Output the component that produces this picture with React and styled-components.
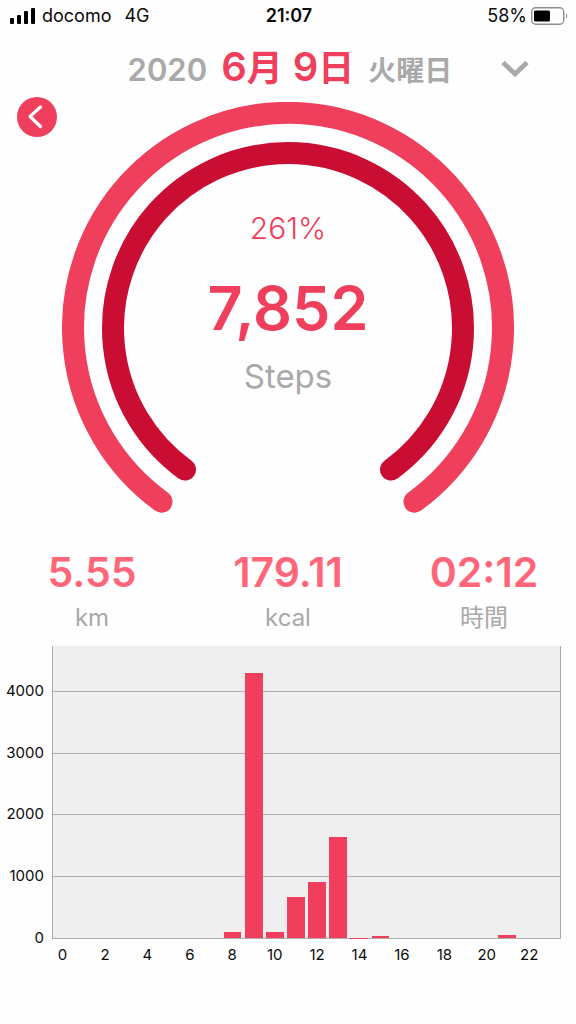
import React from "react";
import styled, { createGlobalStyle } from "styled-components";

const rose = "#ef3f5c";
const coral = "#ff667a";
const crimson = "#c90d33";
const grey = "#a9a9a9";

const GlobalStyle = createGlobalStyle`
  *, *::before, *::after { box-sizing: border-box; }
  body {
    margin: 0;
    background: #fefefe;
    color: #0b0b0b;
    font-family: Inter, "Noto Sans CJK JP", sans-serif;
  }
`;

const Screen = styled.div`
  display: flex;
  flex-direction: column;
  min-height: 100vh;
`;

const StatusBar = styled.div`
  display: grid;
  grid-template-columns: 1fr auto 1fr;
  align-items: center;
  height: 32px;
  padding: 0 8px 0 10px;
  font-size: 18px;
  line-height: 24px;
`;

const StatusGroup = styled.div`
  display: flex;
  align-items: center;
  justify-content: ${(p) => (p.$end ? "flex-end" : "flex-start")};
  gap: ${(p) => (p.$end ? 4 : 7)}px;
`;

const Network = styled.span`
  margin-left: 6px;
`;

const Clock = styled.time`
  font-weight: 600;
`;

const Header = styled.header`
  display: grid;
  grid-template-columns: 1fr auto 1fr;
  align-items: center;
  height: 65px;
  padding: 0 44px 0 48px;
`;

const DateTitle = styled.h1`
  grid-column: 2;
  display: flex;
  align-items: baseline;
  gap: 14px;
  margin: 0;
  padding-top: 9px;
  font-size: 31px;
  line-height: 48px;
  font-weight: 600;
  color: ${grey};
  white-space: nowrap;
`;

const MonthDay = styled.span`
  display: flex;
  align-items: baseline;
  font-size: 40px;
  color: ${rose};
`;

const Unit = styled.span`
  font-size: 36px;
  margin-right: ${(p) => (p.$spaced ? 10 : 0)}px;
`;

const Weekday = styled.span`
  font-size: 28px;
`;

const IconButton = styled.button`
  display: grid;
  place-items: center;
  padding: 0;
  border: 0;
  background: none;
  cursor: pointer;
`;

const ExpandButton = styled(IconButton)`
  justify-self: end;
  width: 34px;
  height: 40px;
  margin-top: 8px;
`;

const BackButton = styled(IconButton)`
  grid-area: 1 / 1;
  align-self: start;
  width: 40px;
  height: 40px;
  margin-left: 17px;
  border-radius: 50%;
  background: ${rose};
  z-index: 1;
`;

const Stage = styled.section`
  display: grid;
`;

const Gauge = styled.div`
  grid-area: 1 / 1;
  justify-self: center;
  display: grid;
  padding-top: 5px;
`;

const Rings = styled.svg`
  grid-area: 1 / 1;
  display: block;
`;

const Readout = styled.div`
  grid-area: 1 / 1;
  display: flex;
  flex-direction: column;
  align-items: center;
  padding-top: 106px;
`;

const Percent = styled.span`
  font-size: 30px;
  line-height: 40px;
  font-weight: 300;
  color: ${rose};
`;

const Steps = styled.strong`
  margin-top: 20px;
  font-size: 61px;
  line-height: 80px;
  font-weight: 600;
  color: ${rose};
`;

const StepsLabel = styled.span`
  margin-top: 8px;
  font-size: 33px;
  line-height: 40px;
  color: ${grey};
`;

const Stats = styled.dl`
  display: grid;
  grid-template-columns: repeat(3, 120px);
  justify-content: space-between;
  margin: 32px 0 0;
  padding: 0 32px;
`;

const Stat = styled.div`
  display: flex;
  flex-direction: column-reverse;
  align-items: center;
`;

const StatValue = styled.dd`
  margin: 0;
  font-size: 41px;
  line-height: 52px;
  font-weight: 600;
  color: ${coral};
`;

const StatLabel = styled.dt`
  font-size: 24px;
  line-height: 40px;
  color: ${grey};
`;

const Chart = styled.figure`
  display: grid;
  grid-template-columns: 52px 1fr;
  grid-template-rows: 293px auto;
  margin: 8px 15px 0 0;
`;

const YAxis = styled.div`
  display: grid;
  grid-template-rows: 740fr repeat(4, 1000fr);
  padding-right: 8px;
  font-size: 15px;
  line-height: 16px;
  text-align: right;
`;

const YTick = styled.span`
  align-self: end;
  margin-bottom: -7px;
`;

const Plot = styled.div`
  display: grid;
  border: solid ${grey};
  border-width: 0 1px;
  background: #efefef;
`;

const Bands = styled.div`
  grid-area: 1 / 1;
  display: grid;
  grid-template-rows: 740fr repeat(4, 1000fr);
`;

const Band = styled.div`
  border-bottom: 1px solid #adadad;
`;

const Bars = styled.div`
  grid-area: 1 / 1;
  display: grid;
  grid-template-columns: repeat(24, 1fr);
  align-items: end;
  justify-items: center;
  padding-bottom: 1px;
`;

const Bar = styled.div`
  width: 84%;
  background: ${rose};
`;

const XAxis = styled.div`
  grid-column: 2;
  display: grid;
  grid-template-columns: repeat(12, 2fr);
  padding-top: 8px;
  font-size: 15px;
  line-height: 16px;
`;

const XTick = styled.span`
  width: 50%;
  display: flex;
  justify-content: center;
`;

const AXIS_MAX = 4740;
const yTicks = [4000, 3000, 2000, 1000, 0];
const hourly = [
  0, 0, 0, 0, 0, 0, 0, 0, 100, 4300, 90, 665,
  915, 1640, 6, 25, 0, 0, 0, 0, 0, 50, 0, 0,
];
const xTicks = [0, 2, 4, 6, 8, 10, 12, 14, 16, 18, 20, 22];
const stats = [
  { value: "5.55", label: "km" },
  { value: "179.11", label: "kcal" },
  { value: "02:12", label: "時間" },
];

export default function App() {
  return (
    <Screen lang="ja">
      <GlobalStyle />
      <StatusBar>
        <StatusGroup>
          <svg width="25" height="16" viewBox="0 0 25 16" aria-hidden="true">
            <rect x="0" y="10" width="4" height="6" rx="1" />
            <rect x="7" y="7" width="4" height="9" rx="1" />
            <rect x="14" y="3" width="4" height="13" rx="1" />
            <rect x="21" y="0" width="4" height="16" rx="1" />
          </svg>
          <span>docomo</span>
          <Network>4G</Network>
        </StatusGroup>
        <Clock>21:07</Clock>
        <StatusGroup $end>
          <span>58%</span>
          <svg width="37" height="18" viewBox="0 0 37 18" aria-hidden="true">
            <rect x="0.75" y="0.75" width="32" height="16.5" rx="4" fill="none" stroke="#8f8f8f" strokeWidth="1.4" />
            <rect x="3" y="3.5" width="16" height="11" rx="1.5" />
            <path d="M35 6.5c1.6.8 1.6 4.2 0 5z" fill="#8f8f8f" />
          </svg>
        </StatusGroup>
      </StatusBar>

      <Header>
        <DateTitle>
          <span>2020</span>
          <MonthDay>
            6<Unit $spaced>月</Unit>9<Unit>日</Unit>
          </MonthDay>
          <Weekday>火曜日</Weekday>
        </DateTitle>
        <ExpandButton type="button" aria-label="日付を選択">
          <svg width="28" height="18" viewBox="0 0 28 18" fill="none" stroke={grey} strokeWidth="4.8">
            <path d="M2 2.5 14 14 26 2.5" />
          </svg>
        </ExpandButton>
      </Header>

      <Stage>
        <BackButton type="button" aria-label="戻る">
          <svg width="40" height="40" viewBox="0 0 40 40" fill="none" stroke="#fff" strokeWidth="3.2" strokeLinecap="round" strokeLinejoin="round">
            <path d="M23.5 10 13 19.500 23.500 29.500" />
          </svg>
        </BackButton>
        <Gauge>
          <Rings width="452" height="412" viewBox="0 0 452 412" fill="none" strokeWidth="22" strokeLinecap="round" aria-hidden="true">
            <path d="M99.500 399.700A215 215 0 1 1 352.500 399.700" stroke={rose} />
            <path d="M123 367.600A175 175 0 1 1 329 367.600" stroke={crimson} />
          </Rings>
          <Readout>
            <Percent>261%</Percent>
            <Steps>7,852</Steps>
            <StepsLabel>Steps</StepsLabel>
          </Readout>
        </Gauge>
      </Stage>

      <Stats>
        {stats.map((s) => (
          <Stat key={s.label}>
            <StatLabel>{s.label}</StatLabel>
            <StatValue>{s.value}</StatValue>
          </Stat>
        ))}
      </Stats>

      <Chart>
        <YAxis>
          {yTicks.map((t) => (
            <YTick key={t}>{t}</YTick>
          ))}
        </YAxis>
        <Plot>
          <Bands>
            {yTicks.map((t) => (
              <Band key={t} />
            ))}
          </Bands>
          <Bars>
            {hourly.map((n, hour) => (
              <Bar key={hour} style={{ height: `${(n / AXIS_MAX) * 100}%` }} />
            ))}
          </Bars>
        </Plot>
        <XAxis>
          {xTicks.map((t) => (
            <XTick key={t}>{t}</XTick>
          ))}
        </XAxis>
      </Chart>
    </Screen>
  );
}
